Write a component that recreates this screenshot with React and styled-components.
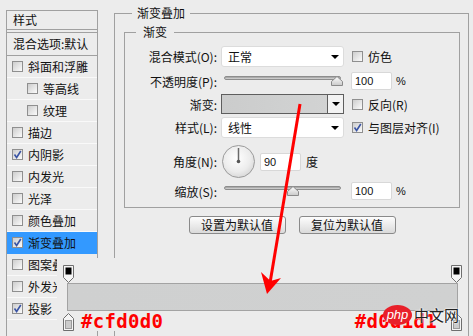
import React from "react";
import styled, { createGlobalStyle } from "styled-components";

const GlobalStyle = createGlobalStyle`
  html, body {
    margin: 0;
    padding: 0;
  }
  body {
    background: #ececec;
    font-family: "Noto Sans CJK SC", "Liberation Sans", sans-serif;
    font-size: 12px;
    color: #111;
    width: 473px;
    height: 336px;
    overflow: hidden;
  }
`;

const Page = styled.div`
  position: relative;
  display: flex;
  align-items: flex-start;
  gap: 16px;
  padding-left: 6px;
  height: 336px;
  overflow: hidden;
`;

/* ---------- left list of styles ---------- */

const StylePanel = styled.div`
  margin-top: 10px;
  width: 92px;
  height: 330px;
  box-sizing: border-box;
  border: 1px solid #a0a0a0;
  border-bottom: none;
  flex: none;
`;

const PanelHead = styled.div`
  height: 18px;
  line-height: 18px;
  padding-left: 6px;
  border-bottom: 1px solid #a0a0a0;
`;

const BlendRow = styled.div`
  margin-top: 2px;
  height: 22px;
  line-height: 22px;
  padding-left: 6px;
  border-top: 1px solid #a0a0a0;
  border-bottom: 1px solid #a0a0a0;
  white-space: nowrap;
`;

const StyleRow = styled.div`
  display: flex;
  align-items: center;
  gap: 5px;
  height: 21px;
  padding-left: ${(p) => (p.$indent ? 20 : 5)}px;
  border-bottom: 1px solid ${(p) => (p.$active ? "#3399ff" : "#f9f9f9")};
  background: ${(p) => (p.$active ? "#3399ff" : "transparent")};
  white-space: nowrap;
`;

const Box = styled.span`
  display: inline-flex;
  align-items: center;
  justify-content: center;
  width: 11px;
  height: 11px;
  box-sizing: border-box;
  border: 1px solid #8f8f8f;
  background: linear-gradient(135deg, #cdcdcd, #fbfbfb);
  flex: none;
`;

const Checkbox = ({ checked }) => (
  <Box>
    {checked && (
      <svg width="9" height="9" viewBox="0 0 9 9">
        <path d="M1.5 4.5 L3.6 7.5 L7.8 1" fill="none" stroke="#3a54a4" strokeWidth="1.6" />
      </svg>
    )}
  </Box>
);

/* ---------- right dialog ---------- */

const Dialog = styled.div`
  margin-top: 5px;
  width: 355px;
  flex: none;
`;

// title row of a group box: the border line runs through the middle of the title
const GroupTitle = styled.div`
  display: flex;
  height: 16px;
  line-height: 16px;
  white-space: nowrap;

  &::before {
    content: "";
    align-self: flex-end;
    width: ${(p) => p.$lead}px;
    height: 8px;
    box-sizing: border-box;
    border-top: 1px solid #a0a0a0;
    border-left: 1px solid #a0a0a0;
  }
  &::after {
    content: "";
    align-self: flex-end;
    flex: 1;
    height: 8px;
    box-sizing: border-box;
    border-top: 1px solid #a0a0a0;
    border-right: 1px solid #a0a0a0;
  }
`;

const GroupName = styled.span`
  padding: 0 ${(p) => p.$pad}px;
`;

const GroupBody = styled.div`
  border: 1px solid #a0a0a0;
  border-top: none;
  padding: ${(p) => p.$padding};
  height: ${(p) => (p.$tall ? "340px" : "auto")};
`;

const FormGrid = styled.div`
  display: grid;
  grid-template-columns: 92px 123px 1fr;
  grid-template-rows: 25px 24px 22px 25px 43px 16px;
  column-gap: 4px;
  align-items: center;
  padding: 4px 0 8px 0;
`;

const Label = styled.span`
  text-align: right;
  white-space: nowrap;
`;

const Side = styled.div`
  display: flex;
  align-items: center;
  gap: 5px;
  padding-left: ${(p) => p.$pad || 4}px;
  white-space: nowrap;
`;

const Select = styled.div`
  height: 21px;
  box-sizing: border-box;
  background: #fff;
  border: 1px solid #dcdcdc;
  border-radius: 3px;
  display: flex;
  align-items: center;
  justify-content: space-between;
  padding: 0 4px 0 6px;
`;

const Caret = styled.span`
  width: 0;
  height: 0;
  border-top: 4px solid #000;
  border-left: 4px solid transparent;
  border-right: 4px solid transparent;
`;

const SliderWrap = styled.div`
  position: relative;
  height: 10px;
  margin: 0 3px 0 3px;
`;

const Track = styled.div`
  height: 4px;
  box-sizing: border-box;
  border: 1px solid #8d8d8d;
  border-radius: 2px;
  background: linear-gradient(#9c9c9c, #d9d9d9);
`;

const ThumbIcon = styled.svg`
  position: absolute;
  top: 0;
  transform: translateX(-50%);
`;

const Slider = ({ value }) => (
  <SliderWrap>
    <Track />
    <ThumbIcon width="12" height="10" viewBox="0 0 12 10" style={{ left: `${value}%` }}>
      <defs>
        <linearGradient id="thumbFill" x1="0" y1="0" x2="0" y2="1">
          <stop offset="0" stopColor="#ffffff" />
          <stop offset="1" stopColor="#c9c9c9" />
        </linearGradient>
      </defs>
      <path d="M0.5 9.5 V5.5 L6 0.5 L11.5 5.5 V9.5 Z" fill="url(#thumbFill)" stroke="#8a8a8a" />
    </ThumbIcon>
  </SliderWrap>
);

const NumberBox = styled.div`
  width: 41px;
  height: 18px;
  box-sizing: border-box;
  background: #fff;
  border: 1px solid #d8d8d8;
  border-radius: 2px;
  padding-left: 3px;
  font-family: "Liberation Sans", sans-serif;
  font-size: 11px;
  line-height: 16px;
  color: #111;
`;

const Unit = styled.span`
  font-family: "Liberation Sans", sans-serif;
  font-size: 11px;
  margin-left: -1px;
`;

const GradientPicker = styled.div`
  display: flex;
  height: 20px;
  box-sizing: border-box;
  border: 1px solid #5e5e5e;
`;

const GradientSwatch = styled.div`
  flex: 1;
  background: linear-gradient(90deg, #cbcccc, #d2d3d3);
`;

const GradientDrop = styled.div`
  width: 15px;
  display: flex;
  align-items: center;
  justify-content: center;
  border-left: 1px solid #5e5e5e;
  background: #f3f3f3;
`;

const AngleRow = styled.div`
  display: flex;
  align-items: center;
  gap: 5px;
  padding-left: 1px;
  white-space: nowrap;
`;

const Dial = () => (
  <svg width="33" height="33" viewBox="0 0 33 33">
    <defs>
      <radialGradient id="dialFill" cx="0.45" cy="0.4" r="0.7">
        <stop offset="0" stopColor="#ffffff" />
        <stop offset="0.6" stopColor="#ececec" />
        <stop offset="1" stopColor="#cfcfcf" />
      </radialGradient>
    </defs>
    <circle cx="16.5" cy="16.5" r="16" fill="url(#dialFill)" stroke="#9b9b9b" />
    <line x1="16.5" y1="3" x2="16.5" y2="16.5" stroke="#6a6a6a" strokeWidth="1.5" />
    <circle cx="16.5" cy="16.5" r="1.8" fill="#555" />
  </svg>
);

const ButtonRow = styled.div`
  display: flex;
  justify-content: center;
  gap: 13px;
  margin-top: 8px;
`;

const Button = styled.button`
  width: 97px;
  height: 18px;
  padding: 0;
  border: 1px solid #8a8a8a;
  border-radius: 3px;
  background: linear-gradient(#fdfdfd, #dadada);
  font-family: "Noto Sans CJK SC", sans-serif;
  font-size: 12px;
  line-height: 16px;
  color: #111;
`;

/* ---------- pasted gradient bar over the dialog ---------- */

const Overlay = styled.div`
  position: absolute;
  left: 57px;
  top: 258px;
  width: 409px;
  height: 73px;
  background: #ececec;
  display: flex;
  flex-direction: column;
  z-index: 2;
`;

const StopRow = styled.div`
  display: flex;
  justify-content: space-between;
  align-items: flex-start;
  margin-top: ${(p) => p.$top}px;
  padding: 0 4px 0 6px;
`;

const StopGroup = styled.div`
  display: flex;
  align-items: flex-start;
  gap: ${(p) => p.$gap}px;
`;

const Bar = styled.div`
  margin-left: 10px;
  width: 391px;
  height: 28px;
  box-sizing: border-box;
  border: 1px solid #a3a3a3;
  background: linear-gradient(90deg, #cfd0d0, #d0d1d1);
`;

const HexText = styled.span`
  margin-top: -1px;
  font-family: "DejaVu Sans Mono", monospace;
  font-weight: bold;
  font-size: 19px;
  line-height: 19px;
  letter-spacing: 0.3px;
  color: #ff0000;
`;

const TopStop = () => (
  <svg width="11" height="18" viewBox="0 0 11 18">
    <path d="M0.5 0.5 H10.5 V12.5 L5.5 17.5 L0.5 12.5 Z" fill="#f5f5f5" stroke="#6e6e6e" />
    <rect x="2.5" y="2.5" width="6" height="7" fill="#000" />
  </svg>
);

const BottomStop = () => (
  <svg width="11" height="18" viewBox="0 0 11 18">
    <path d="M0.5 17.5 H10.5 V5.5 L5.5 0.5 L0.5 5.5 Z" fill="#f5f5f5" stroke="#6e6e6e" />
    <rect x="2.5" y="7.5" width="6" height="8" fill="#cbcbcb" stroke="#9a9a9a" />
  </svg>
);

const Watermark = styled.div`
  position: absolute;
  left: 326px;
  top: 47px;
  display: flex;
  align-items: center;
  gap: 2px;
`;

const PhpBadge = styled.span`
  width: 29px;
  height: 20px;
  border-radius: 50%;
  background: #e8202a;
  color: #fff;
  font-family: "Liberation Sans", sans-serif;
  font-style: italic;
  font-size: 13px;
  line-height: 19px;
  text-align: center;
`;

const SiteName = styled.span`
  font-family: "Noto Sans CJK SC", sans-serif;
  font-size: 15px;
  line-height: 18px;
  color: #222;
  text-shadow: 0 0 2px #fff, 0 0 2px #fff;
`;

const ArrowLayer = styled.svg`
  position: absolute;
  left: 0;
  top: 0;
  z-index: 5;
  pointer-events: none;
`;

const styleItems = [
  { name: "斜面和浮雕" },
  { name: "等高线", indent: true },
  { name: "纹理", indent: true },
  { name: "描边" },
  { name: "内阴影", checked: true },
  { name: "内发光" },
  { name: "光泽" },
  { name: "颜色叠加" },
  { name: "渐变叠加", checked: true, active: true },
  { name: "图案叠加" },
  { name: "外发光" },
  { name: "投影", checked: true },
];

export default function App() {
  return (
    <>
      <GlobalStyle />
      <Page>
        <StylePanel>
          <PanelHead>样式</PanelHead>
          <BlendRow>混合选项:默认</BlendRow>
          {styleItems.map((item) => (
            <StyleRow key={item.name} $indent={item.indent} $active={item.active}>
              <Checkbox checked={item.checked} />
              <span>{item.name}</span>
            </StyleRow>
          ))}
        </StylePanel>

        <Dialog>
          <GroupTitle $lead={18}>
            <GroupName $pad={5}>渐变叠加</GroupName>
          </GroupTitle>
          <GroupBody $tall $padding="3px 8px 0 9px">
            <GroupTitle $lead={12}>
              <GroupName $pad={7}>渐变</GroupName>
            </GroupTitle>
            <GroupBody $padding="0">
              <FormGrid>
                <Label>混合模式(O):</Label>
                <Select>
                  <span>正常</span>
                  <Caret />
                </Select>
                <Side>
                  <Checkbox />
                  <span>仿色</span>
                </Side>

                <Label>不透明度(P):</Label>
                <Slider value={97} />
                <Side $pad={3}>
                  <NumberBox>100</NumberBox>
                  <Unit>%</Unit>
                </Side>

                <Label>渐变:</Label>
                <GradientPicker>
                  <GradientSwatch />
                  <GradientDrop>
                    <Caret />
                  </GradientDrop>
                </GradientPicker>
                <Side>
                  <Checkbox />
                  <span>反向(R)</span>
                </Side>

                <Label>样式(L):</Label>
                <Select>
                  <span>线性</span>
                  <Caret />
                </Select>
                <Side>
                  <Checkbox checked />
                  <span>与图层对齐(I)</span>
                </Side>

                <Label>角度(N):</Label>
                <AngleRow>
                  <Dial />
                  <NumberBox>90</NumberBox>
                  <span>度</span>
                </AngleRow>
                <span />

                <Label>缩放(S):</Label>
                <Slider value={59} />
                <Side $pad={3}>
                  <NumberBox>100</NumberBox>
                  <Unit>%</Unit>
                </Side>
              </FormGrid>
            </GroupBody>
            <ButtonRow>
              <Button>设置为默认值</Button>
              <Button>复位为默认值</Button>
            </ButtonRow>
          </GroupBody>
        </Dialog>

        <Overlay>
          <StopRow $top={7}>
            <TopStop />
            <TopStop />
          </StopRow>
          <Bar />
          <StopRow $top={2}>
            <StopGroup $gap={7}>
              <BottomStop />
              <HexText>#cfd0d0</HexText>
            </StopGroup>
            <StopGroup $gap={14}>
              <HexText>#d0d1d1</HexText>
              <BottomStop />
            </StopGroup>
          </StopRow>
          <Watermark>
            <PhpBadge>php</PhpBadge>
            <SiteName>中文网</SiteName>
          </Watermark>
        </Overlay>

        <ArrowLayer width="473" height="336" viewBox="0 0 473 336">
          <line x1="300" y1="104" x2="270" y2="283" stroke="#ff0000" strokeWidth="3" />
          <path d="M267 294 L261 272 L270.5 281 L281 278 Z" fill="#ff0000" />
        </ArrowLayer>
      </Page>
    </>
  );
}
